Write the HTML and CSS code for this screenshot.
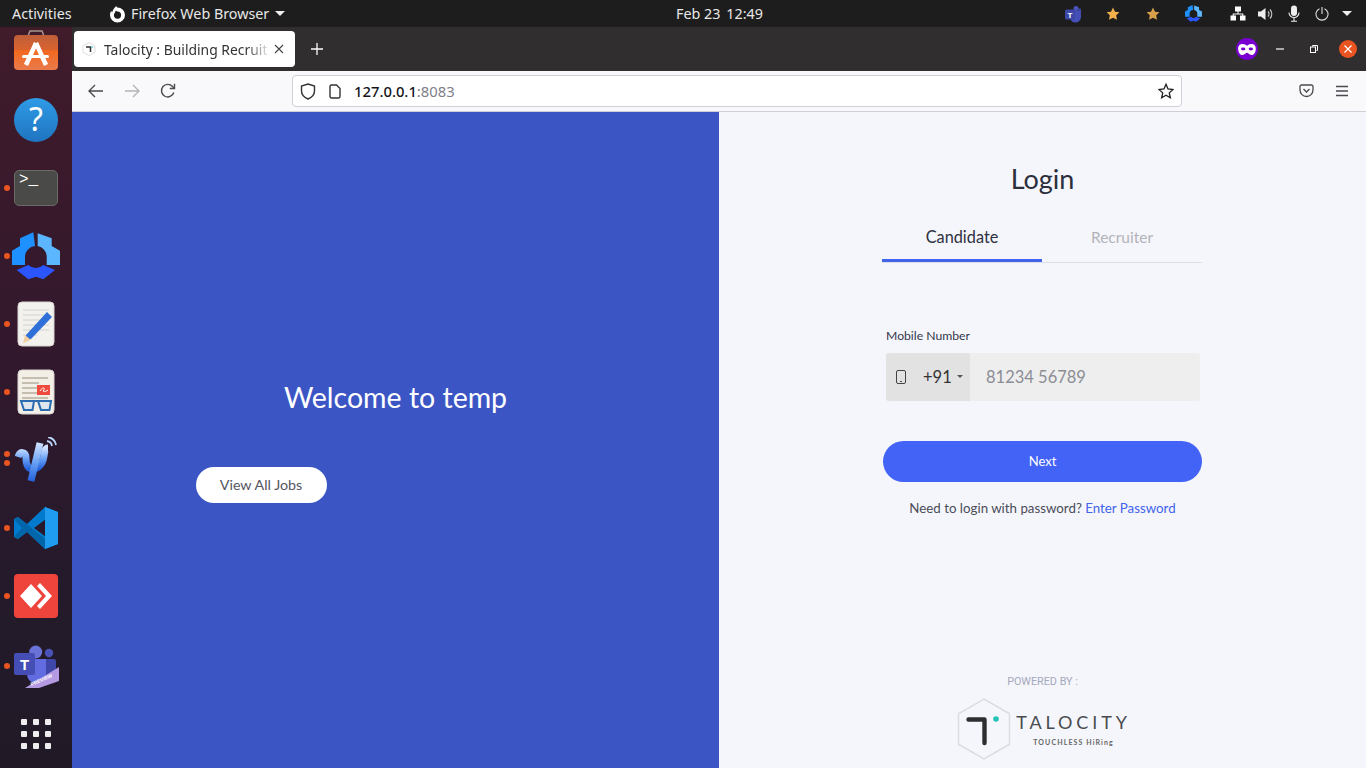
FILE: index.html
```html
<!DOCTYPE html>
<html lang="en">
<head>
	<meta charset="UTF-8">
	<title>Talocity : Building Recruiters</title>
	<link rel="stylesheet" href="styles.css">
</head>
<body>
	<header class="topbar">
		<div class="topbar-left">
			<span class="activities">Activities</span>
			<span class="app-menu">
				<svg width="17" height="18" viewBox="0 0 17 18"><path d="M8.500 2.500a7.500 7.500 0 1 1-7.500 7.500c0-1.500.5-3 1.300-4.200.1.800.4 1.400.8 1.800C3.500 5.500 5 3 7.500.8c-.3 1 0 1.400 1 1.700z" fill="#fff"/><path d="M8.500 6.500a3.600 3.600 0 1 1-3.600 3.800c0-1.800 1.300-3 2-4.800.5.500 1 .9 1.600 1z" fill="#1d1d1d"/></svg>
				Firefox Web Browser
				<i class="caret"></i>
			</span>
		</div>
		<div class="clock"><span>Feb 23</span><span>12:49</span></div>
		<div class="tray">
			<div class="tray-group">
				<span class="tray-item">
					<svg width="18" height="18" viewBox="0 0 18 18"><circle cx="12" cy="3.500" r="2.500" fill="#4b53bc"/><circle cx="15.500" cy="5" r="1.800" fill="#3c4399"/><path d="M6 6h11v6a5.500 5.500 0 0 1-11 0z" fill="#464eb8"/><rect x="1" y="4.500" width="10" height="10" rx="1.500" fill="#3d47a8"/><text x="6" y="12.500" class="tray-t">T</text></svg>
				</span>
				<span class="tray-item">
					<svg width="14" height="14" viewBox="0 0 24 24"><path d="M12 1l3.400 7 7.600 1-5.500 5.300 1.300 7.700-6.800-3.600L5.200 22l1.300-7.700L1 9l7.600-1z" fill="#f2b14a"/></svg>
				</span>
				<span class="tray-item">
					<svg width="14" height="14" viewBox="0 0 24 24"><path d="M12 1l3.400 7 7.600 1-5.500 5.300 1.300 7.700-6.800-3.600L5.200 22l1.300-7.700L1 9l7.600-1z" fill="#d8a04a"/></svg>
				</span>
				<span class="tray-item">
					<svg width="17" height="17" viewBox="0 0 48 48"><path d="M8 6.300L21.300.3 23 14a11 11 0 0 0-10 10.700V33H0V18.700L8 14z" fill="#1e90ff"/><path d="M25.700 1.300l14 5V14l8.300 4.700V33H34.700v-8.300A11 11 0 0 0 25.700 14z" fill="#5cb6ff"/><path d="M4.700 38l11.600-5a11 11 0 0 0 15 0L43 38l-11.700 9.300-7.300-2.600-7.700 2.600z" fill="#2a55ff"/></svg>
				</span>
			</div>
			<span class="tray-item small">
				<svg width="16" height="15" viewBox="0 0 16 15" fill="#fff"><rect x="5" y="0.500" width="6" height="5"/><rect x="0.500" y="9.500" width="5.500" height="5"/><rect x="10" y="9.500" width="5.500" height="5"/><path d="M7.500 5h1v2.500h4.800V10h-1V8.500H3.700V10h-1V7.500h4.800z"/></svg>
			</span>
			<span class="tray-item small">
				<svg width="16" height="14" viewBox="0 0 16 14"><path d="M0 4.500h3L7.500 1v12L3 9.500H0z" fill="#eee"/><path d="M10 4.500a3.500 3.500 0 0 1 0 5M12 2.500a6.500 6.500 0 0 1 0 9" fill="none" stroke="#ccc" stroke-width="1.100"/></svg>
			</span>
			<span class="tray-item small">
				<svg width="12" height="17" viewBox="0 0 12 17"><rect x="3" y="0.500" width="6" height="10.500" rx="3" fill="#eee"/><path d="M1 7.500a5 5 0 0 0 10 0M6 13v3M3 16.200h6" fill="none" stroke="#eee" stroke-width="1.100"/></svg>
			</span>
			<span class="tray-item small">
				<svg width="14" height="14" viewBox="0 0 14 14" fill="none" stroke="#ddd" stroke-width="1.100"><path d="M4.500 1.700a6 6 0 1 0 5 0M7 0v7"/></svg>
			</span>
			<span class="tray-item caret-box"><i class="caret"></i></span>
		</div>
	</header>

	<div class="desktop">
		<nav class="dock">
			<div class="dock-item">
				<svg width="44" height="42" viewBox="0 0 44 42"><defs><linearGradient id="storeg" x1="0" y1="0" x2="0" y2="1"><stop offset="0" stop-color="#bd5f3a"/><stop offset=".42" stop-color="#d9632e"/><stop offset=".45" stop-color="#f4691f"/><stop offset="1" stop-color="#e97a4c"/></linearGradient></defs><path d="M14 7l2-5h12l2 5" fill="none" stroke="#a8968c" stroke-width="1.500"/><rect y="6" width="44" height="35" rx="4" fill="url(#storeg)"/><path d="M22 14L12 36M22 14l10 22" stroke="#fff" stroke-width="4.500" fill="none"/><rect x="8" y="26" width="27" height="3" rx="1.500" fill="#fff"/></svg>
			</div>
			<div class="dock-item">
				<svg width="44" height="44" viewBox="0 0 44 44"><defs><linearGradient id="helpg" x1="0" y1="0" x2="0" y2="1"><stop offset="0" stop-color="#2f9be6"/><stop offset="1" stop-color="#1f74c0"/></linearGradient></defs><circle cx="22" cy="22" r="22" fill="url(#helpg)"/><text x="22" y="33" class="help-mark">?</text></svg>
			</div>
			<div class="dock-item running">
				<div class="term-icon"><span class="term-prompt">&gt;_</span></div>
			</div>
			<div class="dock-item running">
				<svg width="48" height="48" viewBox="0 0 48 48"><path d="M8 6.300L21.300.3 23 14a11 11 0 0 0-10 10.700V33H0V18.700L8 14z" fill="#1e90ff"/><path d="M25.700 1.300l14 5V14l8.300 4.700V33H34.700v-8.300A11 11 0 0 0 25.700 14z" fill="#5cb6ff"/><path d="M4.700 38l11.600-5a11 11 0 0 0 15 0L43 38l-11.700 9.300-7.300-2.600-7.700 2.600z" fill="#2a55ff"/></svg>
			</div>
			<div class="dock-item running">
				<svg width="38" height="46" viewBox="0 0 38 46"><rect x="1" y="1" width="36" height="44" rx="4" fill="#f3f1ee" stroke="#d8d5d0"/><path d="M6 9h26M6 14h26M6 19h26M6 24h26M6 29h26M6 34h14" stroke="#d4d2ce" stroke-width="1"/><path d="M9 34L30 11l5 5-21 22-6 2z" fill="#2f6fd8"/><path d="M8 34l6 5-8 3z" fill="#f1cfa5"/></svg>
			</div>
			<div class="dock-item running">
				<svg width="38" height="46" viewBox="0 0 38 46"><rect x="1" y="1" width="36" height="44" rx="4" fill="#f3eee6" stroke="#d8d5d0"/><path d="M5 9h26M5 14h17M5 19h17M5 24h17M5 29h26" stroke="#b7b0a0" stroke-width="1.500"/><rect x="20" y="16" width="13" height="10" fill="#ee4b3e"/><path d="M23 22c3-5 6-3 3 0 3 1 3 0 5-1" stroke="#fff" fill="none"/><path d="M3 32h32" stroke="#3a6ea8" stroke-width="2"/><path d="M4 32h13l-1.500 9H7zM21 32h13l-1.500 9H24z" fill="#dfe6ee" stroke="#2b6cb0" stroke-width="2"/></svg>
			</div>
			<div class="dock-item running double">
				<svg width="42" height="46" viewBox="0 0 42 46"><defs><linearGradient id="psig" x1="0" y1="0" x2="0" y2="1"><stop offset="0" stop-color="#cfe2ff"/><stop offset=".5" stop-color="#6aa2f5"/><stop offset="1" stop-color="#2563dc"/></linearGradient></defs><path d="M3 20c2-6 8-6 8 1 0 7 2 11 7 11s10-5 11-13c.500-4 1-8 4-8" fill="none" stroke="url(#psig)" stroke-width="7"/><path d="M25 6l-9 38" stroke="url(#psig)" stroke-width="7" fill="none"/><path d="M32 4a6 6 0 0 1 5 5M33 0a10 10 0 0 1 8 8" stroke="#b8d4f8" stroke-width="1.800" fill="none"/></svg>
			</div>
			<div class="dock-item running">
				<svg width="44" height="42" viewBox="0 0 44 42"><path d="M31 0L13 17 4 10 0 12v18l4 2 9-7 18 17 13-5V5zM32 12v18L20 21z" fill="#007acc"/><path d="M31 0l13 5v32l-13 5z" fill="#1f9cf0"/><path d="M0 12l4-2 27 22v10L13 25 4 32l-4-2 8-9z" fill="#0065a9"/></svg>
			</div>
			<div class="dock-item running">
				<svg width="44" height="44" viewBox="0 0 44 44"><rect width="44" height="44" rx="4" fill="#ef443b"/><path d="M17 10l11 12-11 12L6 22z" fill="#fff"/><path d="M26 9l12 13-12 13-3-3 9-10-9-10z" fill="#fff"/></svg>
			</div>
			<div class="dock-item running gap-top">
				<svg width="46" height="44" viewBox="0 0 46 44"><circle cx="22.700" cy="8" r="6.500" fill="#6a72d8"/><circle cx="36" cy="9" r="4.200" fill="#4a52b8"/><rect x="30" y="15" width="13" height="18" rx="2" fill="#3f48a8"/><path d="M14 15h19v15a9.500 9.500 0 0 1-19 0z" fill="#636be0"/><rect x="1" y="9" width="21" height="22" rx="2" fill="#444eb5"/><text x="11.500" y="26" class="teams-t">T</text><path d="M12 44l34-21v14l-20 7z" fill="#b49ae2"/><text x="29" y="37.500" class="teams-preview" transform="rotate(-24 29 37.500)">PREVIEW</text></svg>
			</div>
			<div class="dock-item">
				<div class="apps-grid">
					<i></i><i></i><i></i>
					<i></i><i></i><i></i>
					<i></i><i></i><i></i>
				</div>
			</div>
		</nav>

		<div class="window">
			<div class="tabbar">
				<div class="tab">
					<svg width="14" height="14" viewBox="0 0 14 14"><path d="M7 .5l6 3.300v6.400l-6 3.300-6-3.300V3.800z" fill="#fff" stroke="#ddd"/><path d="M4 5h4.500v5" fill="none" stroke="#333" stroke-width="1.500"/><circle cx="10.300" cy="5" r=".8" fill="#2cc"/></svg>
					<span class="tab-title">Talocity : Building Recruit</span>
					<svg class="tab-close" width="10" height="10" viewBox="0 0 10 10"><path d="M1 1l8 8M9 1l-8 8" stroke="#444" stroke-width="1.100"/></svg>
				</div>
				<svg class="new-tab" width="12" height="12" viewBox="0 0 12 12"><path d="M6 0v12M0 6h12" stroke="#fbfbfe" stroke-width="1.300"/></svg>
				<div class="window-controls">
					<span class="private-badge">
						<svg width="18" height="11" viewBox="0 0 16 10"><path d="M4 0c2 0 3 1 4 1.500C9 1 10 0 12 0c3 0 4 2 4 4.500C16 8 14 10 12 10c-2 0-3-2-4-2s-2 2-4 2C2 10 0 8 0 4.500 0 2 1 0 4 0z" fill="#fff"/><ellipse cx="4.500" cy="4.500" rx="2" ry="1.300" fill="#7a00d1"/><ellipse cx="11.500" cy="4.500" rx="2" ry="1.300" fill="#7a00d1"/></svg>
					</span>
					<svg class="win-min" width="8" height="2" viewBox="0 0 8 2"><path d="M0 1h8" stroke="#fff" stroke-width="1.200"/></svg>
					<svg class="win-max" width="8" height="8" viewBox="0 0 8 8" fill="none" stroke="#fff"><path d="M2.500 1.500V.5h5v5h-1"/><rect x=".5" y="2" width="5" height="5.500"/></svg>
					<span class="win-close">
						<svg width="8" height="8" viewBox="0 0 8 8"><path d="M.5.500l7 7M7.500.500l-7 7" stroke="#fff" stroke-width="1.200"/></svg>
					</span>
				</div>
			</div>

			<div class="navbar">
				<div class="nav-buttons">
					<svg width="16" height="14" viewBox="0 0 16 14" fill="none" stroke="#4a4a4f" stroke-width="1.400"><path d="M7 1L1 7l6 6M1 7h14"/></svg>
					<svg width="16" height="14" viewBox="0 0 16 14" fill="none" stroke="#b4b4b8" stroke-width="1.400"><path d="M9 1l6 6-6 6M15 7H1"/></svg>
					<svg width="16" height="16" viewBox="0 0 16 16" fill="none" stroke="#4a4a4f" stroke-width="1.400"><path d="M13.800 9.500A6.300 6.300 0 1 1 12.500 3.500L14 5"/><path d="M14.500 .8V5.500H9.800" /></svg>
				</div>
				<div class="urlbar">
					<svg width="16" height="17" viewBox="0 0 16 17" fill="none" stroke="#333" stroke-width="1.400"><path d="M8 1l6.500 2v5c0 4-3 6.500-6.500 8C4.500 14.500 1.500 12 1.500 8V3z"/></svg>
					<svg class="url-page" width="12" height="15" viewBox="0 0 12 15" fill="none" stroke="#333" stroke-width="1.400"><path d="M1 2.500a1.500 1.500 0 0 1 1.500-1.500h5L11 4.500v8a1.500 1.500 0 0 1-1.500 1.500h-7A1.500 1.500 0 0 1 1 12.500z"/></svg>
					<span class="url-text">127.0.0.1<span class="url-port">:8083</span></span>
					<svg class="url-star" width="16" height="16" viewBox="0 0 24 24" fill="none" stroke="#222" stroke-width="2"><path d="M12 2l3 7 7.500.8-5.600 5 1.600 7.300L12 18.400 5.500 22.100l1.600-7.300-5.600-5L9 9z"/></svg>
				</div>
				<div class="nav-right">
					<svg width="15" height="14" viewBox="0 0 15 14" fill="none" stroke="#4a4a4f" stroke-width="1.300"><path d="M1 2.500A1.500 1.500 0 0 1 2.500 1h10A1.500 1.500 0 0 1 14 2.500V6a6.500 6.500 0 0 1-13 0z"/><path d="M4.500 5l3 3 3-3"/></svg>
					<svg width="14" height="12" viewBox="0 0 14 12" stroke="#4a4a4f" stroke-width="1.300"><path d="M1 1.500h12M1 6h12M1 10.500h12"/></svg>
				</div>
			</div>

			<main class="page">
				<section class="welcome">
					<div class="welcome-inner">
						<h1>Welcome to temp</h1>
						<a class="jobs-btn">View All Jobs</a>
					</div>
				</section>
				<section class="login">
					<h2>Login</h2>
					<div class="login-tabs">
						<div class="login-tab active">Candidate</div>
						<div class="login-tab">Recruiter</div>
					</div>
					<form class="login-form">
						<label>Mobile Number</label>
						<div class="phone-field">
							<div class="phone-prefix">
								<svg width="10" height="14" viewBox="0 0 10 14" fill="none" stroke="#444"><rect x=".5" y=".5" width="9" height="13" rx="1.500"/><path d="M4 11.500h2" stroke-width="1.200"/></svg>
								<span class="dial-code">+91</span>
								<i class="mini-caret"></i>
							</div>
							<span class="phone-placeholder">81234 56789</span>
						</div>
						<button class="next-btn" type="button">Next</button>
						<p class="pw-hint">Need to login with password? <a>Enter Password</a></p>
					</form>
					<footer class="powered">
						<span class="powered-label">POWERED BY :</span>
						<div class="brand">
							<svg width="54" height="62" viewBox="0 0 54 62"><path d="M27 1l25.500 14.800v30.400L27 61 1.500 46.200V15.800z" fill="none" stroke="#dcdde2" stroke-width="1.500"/><path d="M11.500 21.500h16V45" fill="none" stroke="#2e2e30" stroke-width="4.400" stroke-linecap="round" stroke-linejoin="round"/><circle cx="39" cy="21" r="2.800" fill="#25c2b8"/></svg>
							<div class="brand-text">
								<span class="brand-name">TALOCITY</span>
								<span class="brand-tag">TOUCHLESS HiRing</span>
							</div>
						</div>
					</footer>
				</section>
			</main>
		</div>
	</div>
</body>
</html>
```

FILE: styles.css
```css
* {
	box-sizing: border-box;
}
html, body {
	height: 100%;
}
body {
	margin: 0;
	overflow: hidden;
	display: flex;
	flex-direction: column;
	font-family: Lato, "Open Sans", sans-serif;
	background: #f5f6fb;
}

/* gnome top bar */
.topbar {
	height: 27px;
	flex: none;
	display: flex;
	align-items: center;
	background: #1d1d1d;
	color: #e8e8e8;
	font-family: "Noto Sans", sans-serif;
	font-size: 14.3px;
}
.topbar-left {
	width: 676px;
	display: flex;
	align-items: center;
	padding-left: 12px;
}
.activities {
	width: 97px;
}
.app-menu {
	display: flex;
	align-items: center;
	gap: 5px;
}
.caret {
	width: 0;
	height: 0;
	margin-left: 1px;
	border-left: 5px solid transparent;
	border-right: 5px solid transparent;
	border-top: 5px solid #eee;
}
.clock {
	display: flex;
	gap: 6px;
}
.tray {
	margin-left: auto;
	display: flex;
	align-items: center;
	padding-right: 12px;
	gap: 4px;
}
.tray-group {
	display: flex;
	margin-right: 9px;
}
.tray-group .tray-item {
	width: 40px;
}
.tray-item {
	height: 27px;
	display: flex;
	align-items: center;
	justify-content: center;
}
.tray-item.small {
	width: 24px;
}
.tray-item.caret-box {
	width: 16px;
}
.tray-t {
	fill: #fff;
	font: bold 8px "Liberation Sans", sans-serif;
	text-anchor: middle;
}

/* dock + window */
.desktop {
	flex: 1;
	min-height: 0;
	display: flex;
}
.dock {
	width: 72px;
	flex: none;
	display: flex;
	flex-direction: column;
	background: linear-gradient(180deg, #401b2a 0%, #32182d 45%, #241a2b 75%, #211a26 100%);
}
.dock-item {
	height: 68px;
	flex: none;
	display: flex;
	align-items: center;
	justify-content: center;
	position: relative;
}
.dock-item:first-child {
	height: 46px;
	margin-bottom: 13px;
}
.dock-item.gap-top {
	margin-top: 2px;
}
.dock-item.running::before {
	content: "";
	position: absolute;
	left: 4px;
	top: 31px;
	width: 6px;
	height: 6px;
	border-radius: 50%;
	background: #e95420;
}
.dock-item.double::before {
	top: 25px;
	box-shadow: 0 9px 0 #e95420;
}
.help-mark {
	fill: #fff;
	font: 32px "Noto Sans", sans-serif;
	text-anchor: middle;
}
.term-icon {
	width: 44px;
	height: 36px;
	border-radius: 5px;
	background: #4a4a48;
	border: 1px solid #6a6a68;
	padding: 0 4px;
}
.term-prompt {
	display: block;
	color: #fff;
	font: 16px/18px "Liberation Mono", monospace;
}
.teams-t {
	fill: #fff;
	font: bold 15px "Liberation Sans", sans-serif;
	text-anchor: middle;
}
.teams-preview {
	fill: #fff;
	font: bold 5px "Liberation Sans", sans-serif;
	text-anchor: middle;
}
.apps-grid {
	display: grid;
	grid-template-columns: repeat(3, 6px);
	gap: 6px;
}
.apps-grid i {
	height: 6px;
	border-radius: 1px;
	background: #eee;
}

.window {
	flex: 1;
	min-width: 0;
	display: flex;
	flex-direction: column;
}
.tabbar {
	height: 44px;
	flex: none;
	display: flex;
	align-items: center;
	padding: 0 9px 0 2px;
	background: #302e2f;
}
.tab {
	width: 221px;
	height: 36px;
	display: flex;
	align-items: center;
	padding: 0 10px 0 8px;
	border-radius: 4px;
	background: #fff;
	color: #333;
	font-family: "Noto Sans", sans-serif;
	font-size: 13.9px;
}
.tab-title {
	width: 167px;
	margin-left: 8px;
	white-space: nowrap;
	-webkit-mask-image: linear-gradient(90deg, #000 85%, transparent);
	mask-image: linear-gradient(90deg, #000 85%, transparent);
}
.tab-close {
	margin-left: 3px;
}
.new-tab {
	margin-left: 16px;
}
.window-controls {
	margin-left: auto;
	display: flex;
	align-items: center;
}
.private-badge {
	width: 22px;
	height: 22px;
	display: flex;
	align-items: center;
	justify-content: center;
	border-radius: 50%;
	background: #7a00d1;
}
.win-min {
	margin-left: 18px;
}
.win-max {
	margin-left: 26px;
}
.win-close {
	width: 18px;
	height: 18px;
	margin-left: 21px;
	display: flex;
	align-items: center;
	justify-content: center;
	border-radius: 50%;
	background: #e95420;
}

.navbar {
	height: 41px;
	flex: none;
	display: flex;
	align-items: center;
	background: #f9f9fb;
	border-bottom: 1px solid #cfcfd8;
}
.nav-buttons {
	width: 220px;
	display: flex;
	align-items: center;
	gap: 20px;
	padding-left: 16px;
}
.urlbar {
	width: 890px;
	height: 32px;
	display: flex;
	align-items: center;
	padding: 0 7px;
	background: #fff;
	border: 1px solid #cfcfd8;
	border-radius: 4px;
}
.url-page {
	margin-left: 13px;
}
.url-text {
	margin-left: 13px;
	color: #15141a;
	font-family: "Noto Sans", sans-serif;
	font-size: 14.8px;
	font-weight: 500;
}
.url-port {
	color: #80808a;
	font-weight: 400;
}
.url-star {
	margin-left: auto;
}
.nav-right {
	margin-left: auto;
	display: flex;
	align-items: center;
	gap: 21px;
	padding-right: 17px;
}

/* login page */
.page {
	flex: 1;
	min-height: 0;
	display: grid;
	grid-template-columns: 1fr 1fr;
}
.welcome {
	display: flex;
	align-items: center;
	justify-content: center;
	background: #3c55c4;
}
.welcome-inner {
	width: 400px;
	display: flex;
	flex-direction: column;
	align-items: flex-start;
}
.welcome h1 {
	width: 100%;
	margin: 0 0 51px;
	color: #fff;
	font-size: 28.500px;
	font-weight: 400;
	line-height: 38px;
	text-align: center;
}
.jobs-btn {
	width: 131px;
	height: 36px;
	display: flex;
	align-items: center;
	justify-content: center;
	border-radius: 18px;
	background: #fff;
	color: #54565f;
	font-size: 14.300px;
}
.login {
	display: flex;
	flex-direction: column;
	align-items: center;
	padding-top: 48px;
	background: #f5f6fb;
}
.login h2 {
	margin: 0 0 22px;
	color: #2b2e3c;
	font-size: 27px;
	font-weight: 400;
	line-height: 38px;
}
.login-tabs {
	width: 320px;
	margin-right: 1px;
	display: flex;
	border-bottom: 1px solid #dedfe4;
}
.login-tab {
	width: 160px;
	height: 42px;
	padding-top: 5px;
	color: #b2b3ba;
	font-size: 15.500px;
	line-height: 24px;
	text-align: center;
}
.login-tab.active {
	margin-bottom: -1px;
	height: 42px;
	padding-top: 5px;
	color: #2e3140;
	font-size: 16.300px;
	border-bottom: 3px solid #4263eb;
}
.login-form {
	width: 320px;
	display: flex;
	flex-direction: column;
	align-items: center;
	padding-top: 65px;
}
.login-form label {
	align-self: flex-start;
	margin-left: 3.500px;
	color: #34374a;
	font-size: 12.200px;
	line-height: 16px;
}
.phone-field {
	align-self: flex-start;
	width: 314px;
	height: 48px;
	margin: 9px 0 0 3.500px;
	display: flex;
	align-items: center;
	border-radius: 3px;
	background: #eeeeee;
	overflow: hidden;
}
.phone-prefix {
	width: 84px;
	height: 100%;
	display: flex;
	align-items: center;
	padding: 0 0 1px 10px;
	background: #e2e2e2;
}
.dial-code {
	margin-left: 17px;
	color: #333;
	font-size: 16.500px;
}
.mini-caret {
	width: 0;
	height: 0;
	margin-left: 5px;
	border-left: 3px solid transparent;
	border-right: 3px solid transparent;
	border-top: 3px solid #555;
}
.phone-placeholder {
	margin: 0 0 1px 16px;
	color: #8b8d95;
	font-size: 16.500px;
}
.next-btn {
	width: 319px;
	height: 41px;
	margin-top: 40px;
	padding-bottom: 3px;
	border: 0;
	border-radius: 21px;
	background: #4263f5;
	color: #fff;
	font-family: inherit;
	font-size: 13px;
}
.pw-hint {
	margin: 17px 0 0;
	color: #4a4c58;
	font-size: 13.300px;
	line-height: 18px;
}
.pw-hint a {
	color: #4263eb;
}
.powered {
	margin-top: auto;
	padding-bottom: 8px;
	display: flex;
	flex-direction: column;
	align-items: center;
	gap: 9px;
}
.powered-label {
	color: #a4a8bc;
	font-family: Roboto, sans-serif;
	font-size: 10.800px;
	line-height: 14px;
}
.brand {
	display: flex;
	align-items: center;
	gap: 5px;
	margin-left: 3px;
}
.brand-text {
	display: flex;
	flex-direction: column;
	align-items: center;
	gap: 6px;
}
.brand-name {
	color: #4a4b50;
	font-size: 18px;
	letter-spacing: 3.900px;
	line-height: 20px;
}
.brand-tag {
	color: #666;
	font-size: 7px;
	font-weight: 700;
	letter-spacing: 1.100px;
	line-height: 9px;
}
```
